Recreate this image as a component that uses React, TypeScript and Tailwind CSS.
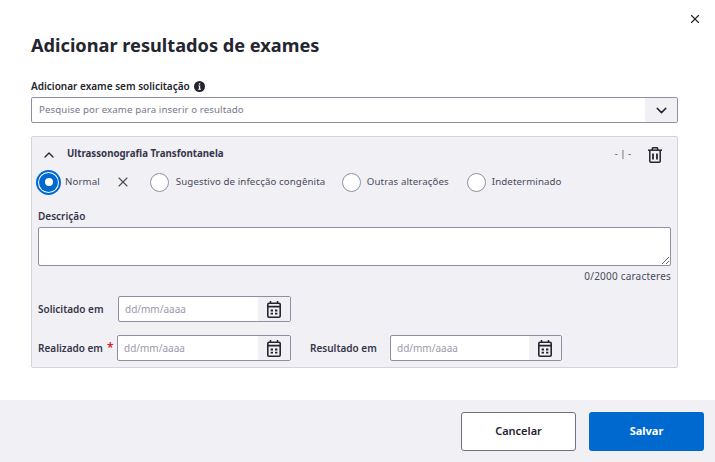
import React from "react";
import { X, ChevronUp, ChevronDown } from "lucide-react";

const font = { fontFamily: '"Noto Sans", "Liberation Sans", sans-serif' };

const InfoIcon = () => (
  <svg width="11" height="11" viewBox="0 0 11 11">
    <circle cx="5.5" cy="5.5" r="5.5" fill="#24252e" />
    <path d="M4.9 2.2h1.3v1.3H4.9zM4.3 4.5h1.9v3.2h.7v1H4.2v-1h.8V5.5h-.7z" fill="#ffffff" />
  </svg>
);

const TrashIcon = () => (
  <svg width="14" height="16" viewBox="0 0 14 16" fill="none" stroke="#24252e" strokeWidth="1.5">
    <path d="M0 3.2h14" />
    <path d="M4.4 3V1.4c0-.4.3-.7.7-.7h3.8c.4 0 .7.3.7.7V3" />
    <path d="M1.8 3.4v10.8c0 .6.4 1 1 1h8.4c.6 0 1-.4 1-1V3.4" />
    <path d="M5 6.5v6M9 6.5v6" strokeWidth="1.8" />
  </svg>
);

const CalendarIcon = () => (
  <svg width="14" height="17" viewBox="0 0 14 17" fill="none">
    <path d="M3.5 0v3M10.5 0v3" stroke="#24252e" strokeWidth="1.5" />
    <rect x="0.8" y="2.3" width="12.4" height="13.9" rx="1.2" stroke="#24252e" strokeWidth="1.6" />
    <path d="M1 5.6h12" stroke="#24252e" strokeWidth="1.8" />
    <path d="M3.6 8.6h2.4v1.9H3.6zM8 8.6h2.4v1.9H8zM3.6 11.7h2.4v1.9H3.6zM8 11.7h2.4v1.9H8z" fill="#24252e" />
  </svg>
);

const Radio = ({ label, textClass }: { label: string; textClass: string }) => (
  <div className="flex items-center">
    <span className="h-[19px] w-[19px] rounded-full border border-[#8f8fa3] bg-white" />
    <span className={`text-[9.7px] tracking-[0.1px] text-[#4a4a5c] ${textClass}`}>{label}</span>
  </div>
);

const DateField = ({ width }: { width: string }) => (
  <div className={`flex h-[26px] items-stretch overflow-hidden rounded-[2px] border border-[#8f8fa3] bg-white ${width}`}>
    <span className="flex flex-1 items-center pl-[6px] text-[10px] text-[#9a9aad]">dd/mm/aaaa</span>
    <span className="flex w-[32px] items-center justify-center bg-[#f0f0f5]">
      <CalendarIcon />
    </span>
  </div>
);

export default function App() {
  return (
    <div className="flex h-[462px] w-[715px] flex-col overflow-hidden bg-white text-[#24252e]" style={font}>
      <div className="flex justify-end pr-[13px] pt-[12px]">
        <X size={14} strokeWidth={2} />
      </div>

      <div className="flex-1 pl-[31px] pr-[37px]">
        <h1 className="mt-[6px] h-[26px] text-[18.2px] font-bold leading-[26px] text-[#24252e]">
          Adicionar resultados de exames
        </h1>

        <div className="mt-[21px] flex h-[14px] items-center gap-[4px] text-[10px] font-semibold">
          Adicionar exame sem solicitação
          <InfoIcon />
        </div>

        <div className="mt-[4px] flex h-[26px] items-stretch overflow-hidden rounded-[2px] border border-[#8f8fa3] bg-white">
          <span className="flex flex-1 items-center pl-[7px] pt-[1px] text-[9.7px] tracking-[0.1px] text-[#77778a]">
            Pesquise por exame para inserir o resultado
          </span>
          <span className="flex w-[32px] items-center justify-center bg-[#f0f0f5]">
            <ChevronDown size={17} strokeWidth={2} />
          </span>
        </div>

        <div className="mt-[13px] h-[232px] rounded-[2px] border border-[#d3d3de] bg-[#f0f0f5] pl-[6px] pr-[6px]">
          <div className="flex h-[32px] items-center justify-between pt-[3px]">
            <div className="flex items-center">
              <ChevronUp size={16} strokeWidth={2} className="ml-[3px]" />
              <span className="ml-[10px] text-[9.7px] font-bold text-[#36364a]">Ultrassonografia Transfontanela</span>
            </div>
            <div className="flex items-center">
              <span className="text-[9.5px] text-[#4a4a5c]">- | -</span>
              <span className="ml-[17px] mr-[9px] flex">
                <TrashIcon />
              </span>
            </div>
          </div>

          <div className="flex h-[26px] items-center">
            <span className="-ml-[2px] flex h-[25px] w-[25px] items-center justify-center rounded-full border-2 border-[#0069d0] bg-white">
              <span className="flex h-[19px] w-[19px] items-center justify-center rounded-full bg-[#0069d0]">
                <span className="h-[8px] w-[8px] rounded-full bg-white" />
              </span>
            </span>
            <span className="ml-[4px] text-[9.7px] tracking-[0.1px] text-[#4a4a5c]">Normal</span>
            <X size={16} strokeWidth={1.6} className="ml-[15px] text-[#4a4a5c]" />
            <span className="ml-[19px]" />
            <Radio label="Sugestivo de infecção congênita" textClass="ml-[7px] w-[166px]" />
            <Radio label="Outras alterações" textClass="ml-[6px] w-[100px]" />
            <Radio label="Indeterminado" textClass="ml-[6px]" />
          </div>

          <div className="mt-[14px] h-[14px] text-[10px] font-semibold leading-[14px] text-[#36364a]">Descrição</div>
          <textarea
            readOnly
            className="mt-[4px] block h-[39px] w-full rounded-[2px] border border-[#8f8fa3] bg-white"
          />
          <div className="mt-[3px] text-right text-[10px] leading-[14px] tracking-[0.2px] text-[#4a4a5c]">
            0/2000 caracteres
          </div>

          <div className="mt-[13px] flex h-[26px] items-center">
            <span className="w-[80px] text-[10px] font-semibold text-[#36364a]">Solicitado em</span>
            <DateField width="w-[173px]" />
          </div>

          <div className="mt-[13px] flex h-[26px] items-center">
            <span className="flex w-[79px] items-center text-[10px] font-semibold text-[#36364a]">
              Realizado em
              <span className="ml-[4px] text-[12px] leading-[12px] text-[#e0182d]">*</span>
            </span>
            <DateField width="w-[174px]" />
            <span className="ml-[19px] w-[80px] text-[10px] font-semibold text-[#36364a]">Resultado em</span>
            <DateField width="w-[172px]" />
          </div>
        </div>
      </div>

      <div className="flex h-[62px] items-center justify-end gap-[13px] bg-[#f0f0f5] pr-[11px]">
        <button className="h-[39px] w-[115px] rounded-[3px] border border-[#6f6f80] bg-white text-[11px] font-semibold text-[#24252e]">
          Cancelar
        </button>
        <button className="h-[39px] w-[115px] rounded-[3px] bg-[#0069d0] text-[11px] font-bold text-white">
          Salvar
        </button>
      </div>
    </div>
  );
}
